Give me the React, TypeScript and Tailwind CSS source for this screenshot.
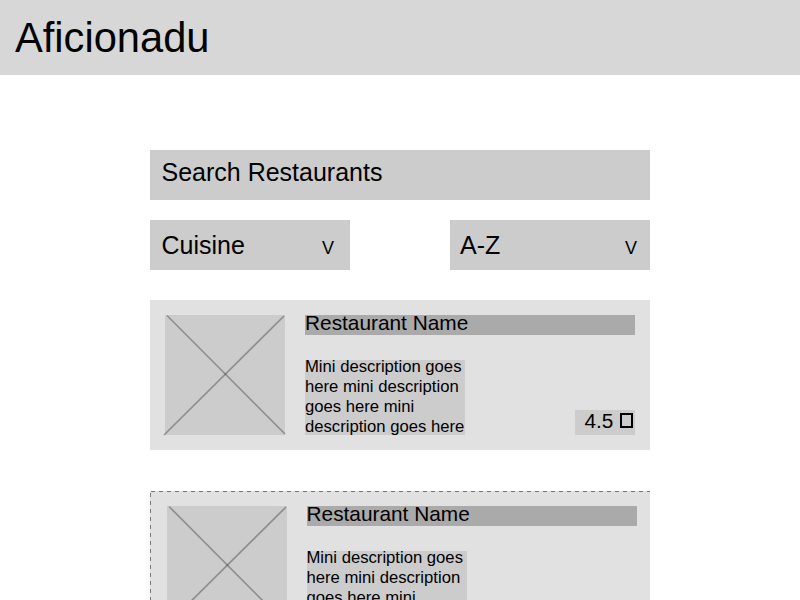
import React from "react";

function Thumbnail() {
  return (
    <svg className="block h-[120px] w-[120px] shrink-0 overflow-visible" viewBox="0 0 120 120">
      <rect width="120" height="120" fill="#cccccc" />
      <g stroke="#000000" strokeOpacity="0.3" strokeWidth="1.7">
        <path d="M2 0.5 L120 119" />
        <path d="M119 1 L-1 120" />
      </g>
    </svg>
  );
}

function Select({ label, className }: { label: string; className: string }) {
  return (
    <div className={`flex h-[50px] w-[200px] justify-between bg-[#cccccc] text-[25px] leading-[50px] ${className}`}>
      <span>{label}</span>
      <span className="text-[18px] leading-[56px]">V</span>
    </div>
  );
}

function Description() {
  return (
    <div className="h-[75px] w-[160px] bg-[#cccccc] text-[16.67px] leading-[20px] whitespace-nowrap">
      <div className="-mt-[3px]">Mini description goes</div>
      <div>here mini description</div>
      <div>goes here mini</div>
      <div>description goes here</div>
    </div>
  );
}

function CardBody() {
  return (
    <>
      <Thumbnail />
      <div className="ml-5 w-[330px] shrink-0">
        <div className="h-5 bg-[#aaaaaa] text-[20.83px] leading-[15px]">Restaurant Name</div>
        <div className="mt-[25px] flex items-end justify-between">
          <Description />
          <div className="flex h-[25px] w-[60px] bg-[#cccccc] pl-[9.5px] text-[20.83px] leading-[21px]">
            <span>4.5</span>
            <span className="mt-[3px] ml-[7px] h-[15px] w-[13px] border-2 border-black" />
          </div>
        </div>
      </div>
    </>
  );
}

export default function App() {
  return (
    <div className="h-[600px] w-[800px] overflow-hidden bg-white font-['Liberation_Sans',Arial,sans-serif] text-black">
      <header className="h-[75px] bg-[#d7d7d7] pl-[15px] text-[41.67px] leading-[75px]">Aficionadu</header>
      <main className="mx-auto mt-[75px] w-[500px]">
        <div className="h-[50px] bg-[#cccccc] pl-[11.5px] text-[25px] leading-[45px]">Search Restaurants</div>
        <div className="mt-5 flex justify-between">
          <Select label="Cuisine" className="pr-4 pl-[11.5px]" />
          <Select label="A-Z" className="pr-[13px] pl-[10px]" />
        </div>
        <article className="mt-[30px] flex h-[150px] bg-[#e1e1e1] p-[15px]"><CardBody /></article>
        <article className="relative mt-[41px] flex h-[150px] bg-[#e1e1e1] pt-[15px] pl-[16.5px]">
          <svg className="absolute top-0 left-0 h-[150px] w-[500px]" viewBox="0 0 500 150" fill="none" stroke="#777777" strokeDasharray="4 4">
            <path d="M1 0.5 H500" />
            <path d="M0.5 2 V150" />
          </svg>
          <CardBody />
        </article>
      </main>
    </div>
  );
}
